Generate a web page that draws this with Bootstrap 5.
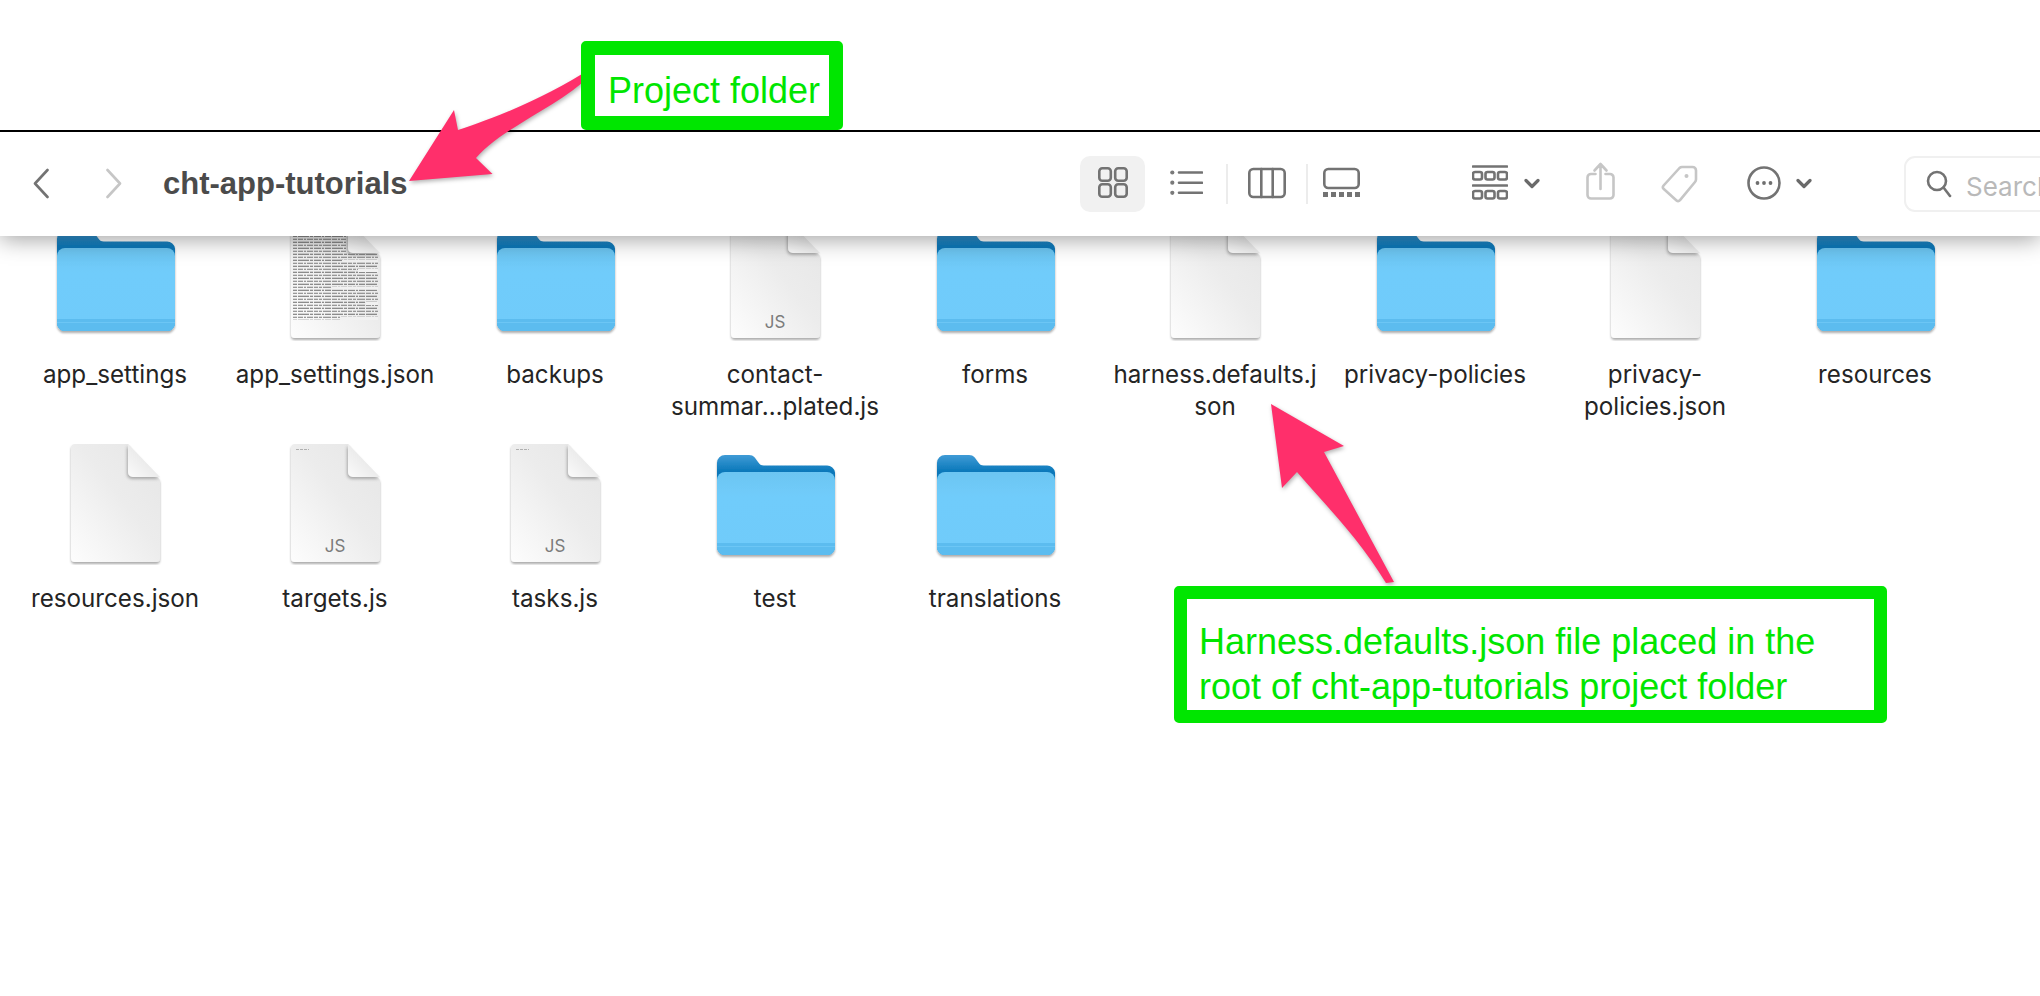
<!DOCTYPE html>
<html lang="en">
<head>
    <meta charset="UTF-8">
    <title>cht-app-tutorials</title>
    <link rel="stylesheet" href="https://cdn.jsdelivr.net/npm/bootstrap@5.3.0/dist/css/bootstrap.min.css">
    <style>
        html, body { height: 100%; overflow: hidden; background: #fff; }
        .page-shot { width: 2040px; height: 996px; }
        .top-gap { height: 130px; border-bottom: 2px solid #000; box-sizing: content-box; }

        /* finder toolbar */
        .finder-bar { height: 104px; padding-left: 33px; background: #fff; z-index: 2; box-shadow: 0 3px 22px rgba(0, 0, 0, .38); clip-path: inset(0 0 -50px 0); }
        .finder-bar svg { flex-shrink: 0; height: 56px; fill: none; stroke-linecap: round; stroke-linejoin: round; }
        .nav-fwd { margin-left: 57px; }
        .folder-title { margin-left: 41px; font: 700 31px "Liberation Sans", Arial, sans-serif; color: #4b4b4b; }
        .bar-right { width: 960px; flex-shrink: 0; }
        .view-on { width: 65px; height: 56px; background: #f1f1f1; border-radius: 10px; }
        .ic-line { stroke: #737373; stroke-width: 2.6; }
        .ic-off { stroke: #c6c6c6; stroke-width: 2.6; }
        .ic-chev { stroke: #6a6a6a; stroke-width: 3.2; }
        .ic-list { margin-left: 25px; }
        .bar-sep { width: 2px; height: 40px; background: #ececec; }
        .sep-a { margin-left: 23px; }
        .ic-cols { margin-left: 20px; }
        .sep-b { margin-left: 20px; }
        .ic-gal { margin-left: 15px; }
        .ic-group { margin-left: 112px; }
        .chev-a { margin-left: 16px; }
        .ic-share { margin-left: 46px; }
        .ic-tag { margin-left: 46px; }
        .ic-more { margin-left: 49px; }
        .chev-b { margin-left: 15px; }
        .search-box { margin-left: 92px; width: 136px; height: 56px; padding-left: 20px; border: 2px solid #f0f0f0; border-right: 0; border-radius: 11px 0 0 11px; font: 400 26px Inter, sans-serif; color: #b9b9b9; white-space: nowrap; overflow: hidden; }
        .search-box svg { margin-right: 14px; height: 30px; }
        .search-box span { padding-top: 4px; }

        /* icon grid */
        .file-grid { margin-top: -19px; padding-left: 5px; grid-template-columns: repeat(9, 220px); grid-auto-rows: 224px; }
        .file-cell svg { width: 130px; height: 124px; }
        .file-name { margin-top: 18px; font: 400 24.2px/32px Inter, sans-serif; color: #242424; white-space: nowrap; }

        /* annotations */
        .note-box { z-index: 3; background: #fff; border: 14px solid #00e600; border-radius: 5px; font-family: "Liberation Sans", Arial, sans-serif; color: #00e600; }
        .note-project { left: 581px; top: 41px; width: 262px; height: 89px; padding: 10px 0 0 13px; font-size: 36px; }
        .note-harness { left: 1174px; top: 586px; width: 713px; height: 137px; border-width: 13px; padding: 20px 0 0 12px; font-size: 36px; line-height: 45px; white-space: nowrap; }
        .arrow-layer { z-index: 3; left: 0; top: 0; pointer-events: none; filter: drop-shadow(1px 2px 2px rgba(0, 0, 0, .3)); }
    </style>
</head>

<body>
    <!-- shared shapes for the file icons -->
    <svg width="0" height="0" class="position-absolute">
        <defs>
            <linearGradient id="fBack" x1="0" y1="0" x2="0" y2="1">
                <stop offset="0" stop-color="#3f9bd6"/><stop offset=".17" stop-color="#0877b9"/>
            </linearGradient>
            <linearGradient id="fFront" x1="0" y1="0" x2="0" y2="1">
                <stop offset="0" stop-color="#6cc5f1"/><stop offset=".3" stop-color="#70ccfb"/><stop offset="1" stop-color="#6fcbfa"/>
            </linearGradient>
            <linearGradient id="dBody" x1="0" y1="1" x2="1" y2="0">
                <stop offset="0" stop-color="#fdfdfd"/><stop offset=".55" stop-color="#ececec"/><stop offset="1" stop-color="#e6e6e6"/>
            </linearGradient>
            <linearGradient id="dFold" x1="0" y1="1" x2="1" y2="0">
                <stop offset="0" stop-color="#fbfbfb"/><stop offset="1" stop-color="#dcdcdc"/>
            </linearGradient>
            <pattern id="txt" width="34" height="6" patternUnits="userSpaceOnUse">
                <path d="M0 1.200h5m1 0h3m1 0h7m1 0h2m1 0h6m1 0h6" stroke="#6a6a6a" stroke-width="1.100"/>
                <path d="M0 4.200h2m1 0h6m1 0h4m1 0h3m1 0h8m1 0h5" stroke="#7a7a7a" stroke-width="1.100"/>
            </pattern>
            <filter id="soft" x="-10%" y="-10%" width="120%" height="125%">
                <feDropShadow dx="0" dy="2" stdDeviation="1.2" flood-color="#000" flood-opacity=".32"/>
            </filter>
            <filter id="foldSh" x="-30%" y="-30%" width="160%" height="160%">
                <feDropShadow dx="-1" dy="2" stdDeviation="1.5" flood-color="#000" flood-opacity=".28"/>
            </filter>
            <symbol id="folder" viewBox="0 0 130 124">
                <g filter="url(#soft)">
                    <path d="M7 22a8 8 0 0 1 8-8h24c5 0 6 3 9 7 1.500 2.500 3 3.500 6 3.500h63a8 8 0 0 1 8 7V106a8 8 0 0 1-8 8H15a8 8 0 0 1-8-8Z" fill="url(#fBack)"/>
                    <path d="M7 39a8 8 0 0 1 8-8h102a8 8 0 0 1 8 8v67a8 8 0 0 1-8 8H15a8 8 0 0 1-8-8Z" fill="url(#fFront)"/>
                    <path d="M7 102h118v4a8 8 0 0 1-8 8H15a8 8 0 0 1-8-8Z" fill="#5cbcef"/>
                    <path d="M7 105.500h118" stroke="#6cc6f5" stroke-width="1"/>
                </g>
            </symbol>
            <symbol id="doc" viewBox="0 0 130 124">
                <path d="M25 3h53l32 36v78a4 4 0 0 1-4 4H25a4 4 0 0 1-4-4V7a4 4 0 0 1 4-4Z" fill="url(#dBody)" filter="url(#soft)"/>
                <path d="M78 3l32 33h-27a5 5 0 0 1-5-5Z" fill="url(#dFold)" filter="url(#foldSh)"/>
            </symbol>
        </defs>
    </svg>

    <div class="page-shot position-relative overflow-hidden">
        <div class="top-gap"></div>

        <div class="finder-bar d-flex align-items-center position-relative">
            <svg width="16" viewBox="0 0 16 56"><path class="ic-line" d="M14.500 14 2 27.500 14.500 41"/></svg>
            <svg class="nav-fwd" width="16" viewBox="0 0 16 56"><path class="ic-off" d="M1.500 14 14 27.500 1.500 41"/></svg>
            <div class="folder-title flex-grow-1">cht-app-tutorials</div>

            <div class="bar-right d-flex align-items-center">
                <div class="view-on d-flex align-items-center justify-content-center">
                    <svg width="30" viewBox="0 0 30 56">
                        <rect class="ic-line" x="1.300" y="12.300" width="11.500" height="12.500" rx="3"/><rect class="ic-line" x="17.200" y="12.300" width="11.500" height="12.500" rx="3"/>
                        <rect class="ic-line" x="1.300" y="28.300" width="11.500" height="12.500" rx="3"/><rect class="ic-line" x="17.200" y="28.300" width="11.500" height="12.500" rx="3"/>
                    </svg>
                </div>
                <svg class="ic-list" width="33" viewBox="0 0 33 56">
                    <path class="ic-line" d="M9 16.500h23M9 26.700h23M9 36.800h23"/>
                    <circle cx="2.300" cy="16.500" r="2.100" fill="#7a7a7a"/><circle cx="2.300" cy="26.700" r="2.100" fill="#7a7a7a"/><circle cx="2.300" cy="36.800" r="2.100" fill="#7a7a7a"/>
                </svg>
                <div class="bar-sep sep-a"></div>
                <svg class="ic-cols" width="38" viewBox="0 0 38 56"><rect class="ic-line" x="1.300" y="13" width="35.400" height="28" rx="4"/><path class="ic-line" d="M13.300 13v28M24.700 13v28"/></svg>
                <div class="bar-sep sep-b"></div>
                <svg class="ic-gal" width="37" viewBox="0 0 37 56">
                    <rect class="ic-line" x="1.300" y="13" width="34.400" height="19" rx="4"/>
                    <path fill="#737373" d="M0 36h5v5H0zM8 36h5v5H8zM16 36h5v5h-5zM24 36h5v5h-5zM32 36h5v5h-5z"/>
                </svg>
                <svg class="ic-group" width="36" viewBox="0 0 36 56">
                    <path class="ic-line" d="M1 10.500h34M1 29.500h34"/>
                    <g class="ic-line" stroke-width="2.200">
                        <rect x="1" y="16" width="9" height="7.500" rx="2"/><rect x="13.500" y="16" width="9" height="7.500" rx="2"/><rect x="26" y="16" width="9" height="7.500" rx="2"/>
                        <rect x="1" y="35" width="9" height="7.500" rx="2"/><rect x="13.500" y="35" width="9" height="7.500" rx="2"/><rect x="26" y="35" width="9" height="7.500" rx="2"/>
                    </g>
                </svg>
                <svg class="chev-a" width="16" viewBox="0 0 16 56"><path class="ic-chev" d="M2 24.500l6 6 6-6"/></svg>
                <svg class="ic-share" width="29" viewBox="0 0 29 56">
                    <path class="ic-off" d="M9.500 18H5a3.500 3.500 0 0 0-3.500 3.500V39A3.500 3.500 0 0 0 5 42.500h19a3.500 3.500 0 0 0 3.500-3.500V21.500A3.500 3.500 0 0 0 24 18h-4.500M14.500 33V8.500M8.500 14.500l6-6.500 6 6.500"/>
                </svg>
                <svg class="ic-tag" width="37" viewBox="0 0 37 56">
                    <path class="ic-off" d="M21 11h10.500a3.500 3.500 0 0 1 3.500 3.500v8.800a4 4 0 0 1-1 2.700L19 44.200a2.500 2.500 0 0 1-3.500.2L2.800 33a2.500 2.500 0 0 1-.2-3.500L18.500 12a4 4 0 0 1 2.500-1Z"/>
                    <circle cx="25.500" cy="20" r="2" fill="#c6c6c6"/>
                </svg>
                <svg class="ic-more" width="34" viewBox="0 0 34 56">
                    <circle class="ic-line" cx="17" cy="27" r="15.500"/>
                    <circle cx="10.500" cy="27" r="1.900" fill="#6f6f6f"/><circle cx="17" cy="27" r="1.900" fill="#6f6f6f"/><circle cx="23.500" cy="27" r="1.900" fill="#6f6f6f"/>
                </svg>
                <svg class="chev-b" width="16" viewBox="0 0 16 56"><path class="ic-chev" d="M2 24.500l6 6 6-6"/></svg>
                <div class="search-box d-flex align-items-center flex-shrink-0">
                    <svg width="26" viewBox="0 0 26 30"><circle class="ic-line" cx="11" cy="12" r="9"/><path class="ic-line" d="M17.500 18.500 24 27"/></svg>
                    <span>Search</span>
                </div>
            </div>
        </div>

        <div class="file-grid d-grid">
            <div class="file-cell text-center"><svg><use href="#folder"/></svg><div class="file-name">app_settings</div></div>
            <div class="file-cell text-center">
                <svg viewBox="0 0 130 124">
                    <use href="#doc"/>
                    <path d="M23 8h53v27h4v2h28v66H23Z" fill="url(#txt)"/>
                    <path d="M70 100h38v3H70ZM88 52h20v3H88ZM62 70h46v2.500H62ZM96 85h12v3H96ZM72 43h36v2H72Z" fill="#f1f1f1"/>
                </svg>
                <div class="file-name">app_settings.json</div>
            </div>
            <div class="file-cell text-center"><svg><use href="#folder"/></svg><div class="file-name">backups</div></div>
            <div class="file-cell text-center">
                <svg viewBox="0 0 130 124"><use href="#doc"/><text x="65" y="111" text-anchor="middle" font-family="Inter, sans-serif" font-size="17" fill="#7c7c7c">JS</text></svg>
                <div class="file-name">contact-<br>summar…plated.js</div>
            </div>
            <div class="file-cell text-center"><svg><use href="#folder"/></svg><div class="file-name">forms</div></div>
            <div class="file-cell text-center"><svg><use href="#doc"/></svg><div class="file-name">harness.defaults.j<br>son</div></div>
            <div class="file-cell text-center"><svg><use href="#folder"/></svg><div class="file-name">privacy-policies</div></div>
            <div class="file-cell text-center"><svg><use href="#doc"/></svg><div class="file-name">privacy-<br>policies.json</div></div>
            <div class="file-cell text-center"><svg><use href="#folder"/></svg><div class="file-name">resources</div></div>

            <div class="file-cell text-center"><svg><use href="#doc"/></svg><div class="file-name">resources.json</div></div>
            <div class="file-cell text-center">
                <svg viewBox="0 0 130 124"><use href="#doc"/><path d="M26 8.500h13" stroke="#b0b0b0" stroke-width="1" stroke-dasharray="3 1"/><text x="65" y="111" text-anchor="middle" font-family="Inter, sans-serif" font-size="17" fill="#7c7c7c">JS</text></svg>
                <div class="file-name">targets.js</div>
            </div>
            <div class="file-cell text-center">
                <svg viewBox="0 0 130 124"><use href="#doc"/><path d="M26 8.500h13" stroke="#b0b0b0" stroke-width="1" stroke-dasharray="3 1"/><text x="65" y="111" text-anchor="middle" font-family="Inter, sans-serif" font-size="17" fill="#7c7c7c">JS</text></svg>
                <div class="file-name">tasks.js</div>
            </div>
            <div class="file-cell text-center"><svg><use href="#folder"/></svg><div class="file-name">test</div></div>
            <div class="file-cell text-center"><svg><use href="#folder"/></svg><div class="file-name">translations</div></div>
        </div>

        <!-- annotations on top of the screenshot -->
        <svg class="arrow-layer position-absolute" width="2040" height="996" viewBox="0 0 2040 996">
            <path fill="#ff2f6b" d="M409 181 454 110 458 130C490 120 540 100 582 74V83C550 110 500 130 476 158L492.500 174Z"/>
            <path fill="#ff2f6b" d="M1271 404 1344 446 1324 452 1394 582 1386 583C1360 540 1330 510 1297 472L1282 488Z"/>
        </svg>
        <div class="note-box note-project position-absolute d-flex align-items-center">Project folder</div>
        <div class="note-box note-harness position-absolute">Harness.defaults.json file placed in the<br>root of cht-app-tutorials project folder</div>
    </div>

    <script src="https://cdn.jsdelivr.net/npm/bootstrap@5.3.0/dist/js/bootstrap.bundle.min.js"></script>
</body>
</html>
